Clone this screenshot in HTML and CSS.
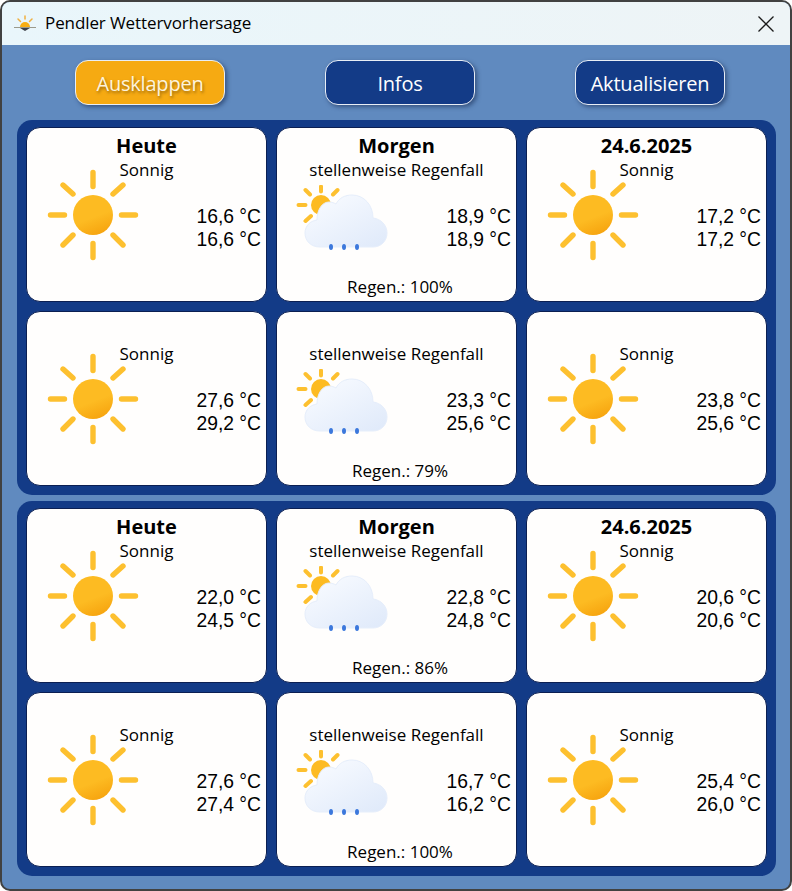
FILE: index.html
```html
<!DOCTYPE html>
<html lang="de">
  <head>
    <meta charset="UTF-8" />
    <meta name="viewport" content="width=device-width, initial-scale=1.0" />
    <title>Pendler Wettervorhersage</title>
    <link rel="stylesheet" href="styles.css">
  </head>
  <body>
    <!-- Icons, reused by every card -->
    <svg class="defs" width="0" height="0">
      <defs>
        <linearGradient id="sunFill" x1="0.35" y1="0.1" x2="0.7" y2="1">
          <stop offset="0.5" stop-color="#fdbb22" />
          <stop offset="1" stop-color="#f6a30e" />
        </linearGradient>
        <linearGradient id="cloudFill" x1="0.15" y1="0.1" x2="0.9" y2="1">
          <stop offset="0" stop-color="#f7faff" />
          <stop offset="1" stop-color="#e0eafa" />
        </linearGradient>
        <symbol id="sun" viewBox="0 0 92 92">
          <g stroke="#fdc02f" stroke-width="5.4" stroke-linecap="round">
            <path d="M46 3.5V17.5M46 74.5V88.5M3.500 46H17.500M74.500 46H88.500M16 16L26 25M66 25L76 16M16 76L26 66M66 66L76 76" />
          </g>
          <circle cx="46" cy="46" r="20" fill="url(#sunFill)" />
        </symbol>
        <symbol id="rain" viewBox="0 0 92 72">
          <g stroke="#fdc02f" stroke-width="4" stroke-linecap="round">
            <path d="M25 1.500V6.500M9.500 5L14 9.500M41.500 5L37 9.500M2.500 20H9.500M9.500 36L15 31" />
          </g>
          <circle cx="25" cy="20" r="10" fill="#fdbb22" />
          <path d="M24 62C15 62 9 56 9 48C9 41 14 36 21 35C21 25 26 17 33 17C36 17 38 18 40 19C43 13 49 10 56 10C68 10 77 20 77 33C85 34 91 40 91 48C91 56 85 62 77 62Z" fill="url(#cloudFill)" stroke="#e6eefb" />
          <g fill="#3c78dc">
            <ellipse cx="35" cy="62" rx="2" ry="3" />
            <ellipse cx="48" cy="62" rx="2" ry="3" />
            <ellipse cx="61" cy="62" rx="2" ry="3" />
          </g>
        </symbol>
      </defs>
    </svg>

    <div class="window">
      <div class="titlebar">
        <svg class="app-icon" viewBox="0 0 24 20" width="24" height="20">
          <g stroke="#f0b040" stroke-width="1.500" stroke-linecap="round">
            <path d="M12 2V5M5 5L7.500 7.500M19 5L16.500 7.500" />
          </g>
          <path d="M7 13A5 5 0 0 1 17 13Z" fill="#f8ae14" />
          <path d="M1 13.500H23" stroke="#9a9a8c" stroke-width="1.200" />
          <path d="M7 14H17L12 17Z" fill="#3d4048" />
        </svg>
        <span class="app-title">Pendler Wettervorhersage</span>
        <svg class="close" viewBox="0 0 16 16" width="16" height="16">
          <path d="M0.500 0.500L15.500 15.500M15.500 0.500L0.500 15.500" stroke="#1a1a1a" stroke-width="1.300" />
        </svg>
      </div>

      <div class="content">
        <div class="toolbar">
          <button class="btn btn-active">Ausklappen</button>
          <button class="btn">Infos</button>
          <button class="btn">Aktualisieren</button>
        </div>

        <div class="panel">
          <div class="card">
            <div class="day">Heute</div>
            <div class="cond">Sonnig</div>
            <svg class="icon-sun"><use href="#sun" /></svg>
            <div class="temps">16,6 °C<br>16,6 °C</div>
          </div>
          <div class="card">
            <div class="day">Morgen</div>
            <div class="cond">stellenweise Regenfall</div>
            <svg class="icon-rain"><use href="#rain" /></svg>
            <div class="temps">18,9 °C<br>18,9 °C</div>
            <div class="rain">Regen.: 100%</div>
          </div>
          <div class="card">
            <div class="day">24.6.2025</div>
            <div class="cond">Sonnig</div>
            <svg class="icon-sun"><use href="#sun" /></svg>
            <div class="temps">17,2 °C<br>17,2 °C</div>
          </div>
          <div class="card">
            <div class="day"></div>
            <div class="cond">Sonnig</div>
            <svg class="icon-sun"><use href="#sun" /></svg>
            <div class="temps">27,6 °C<br>29,2 °C</div>
          </div>
          <div class="card">
            <div class="day"></div>
            <div class="cond">stellenweise Regenfall</div>
            <svg class="icon-rain"><use href="#rain" /></svg>
            <div class="temps">23,3 °C<br>25,6 °C</div>
            <div class="rain">Regen.: 79%</div>
          </div>
          <div class="card">
            <div class="day"></div>
            <div class="cond">Sonnig</div>
            <svg class="icon-sun"><use href="#sun" /></svg>
            <div class="temps">23,8 °C<br>25,6 °C</div>
          </div>
        </div>

        <div class="panel">
          <div class="card">
            <div class="day">Heute</div>
            <div class="cond">Sonnig</div>
            <svg class="icon-sun"><use href="#sun" /></svg>
            <div class="temps">22,0 °C<br>24,5 °C</div>
          </div>
          <div class="card">
            <div class="day">Morgen</div>
            <div class="cond">stellenweise Regenfall</div>
            <svg class="icon-rain"><use href="#rain" /></svg>
            <div class="temps">22,8 °C<br>24,8 °C</div>
            <div class="rain">Regen.: 86%</div>
          </div>
          <div class="card">
            <div class="day">24.6.2025</div>
            <div class="cond">Sonnig</div>
            <svg class="icon-sun"><use href="#sun" /></svg>
            <div class="temps">20,6 °C<br>20,6 °C</div>
          </div>
          <div class="card">
            <div class="day"></div>
            <div class="cond">Sonnig</div>
            <svg class="icon-sun"><use href="#sun" /></svg>
            <div class="temps">27,6 °C<br>27,4 °C</div>
          </div>
          <div class="card">
            <div class="day"></div>
            <div class="cond">stellenweise Regenfall</div>
            <svg class="icon-rain"><use href="#rain" /></svg>
            <div class="temps">16,7 °C<br>16,2 °C</div>
            <div class="rain">Regen.: 100%</div>
          </div>
          <div class="card">
            <div class="day"></div>
            <div class="cond">Sonnig</div>
            <svg class="icon-sun"><use href="#sun" /></svg>
            <div class="temps">25,4 °C<br>26,0 °C</div>
          </div>
        </div>
      </div>
    </div>
  </body>
</html>
```

FILE: styles.css
```css
html,
body {
  margin: 0;
  background-color: white;
}
body {
  font-family: "Open Sans", "Noto Sans", sans-serif;
  color: black;
}
.defs {
  display: block;
  height: 0;
}
.window {
  width: 792px;
  height: 891px;
  box-sizing: border-box;
  border: 2px solid #414141;
  border-radius: 10px;
  overflow: hidden;
  background-color: #608abf;
}

/* Title bar */
.titlebar {
  height: 43px;
  display: flex;
  align-items: center;
  padding-left: 11px;
  padding-right: 16px;
  background: linear-gradient(to right, #e9f6fb, #eef4f6);
}
.app-icon {
  margin-right: 8px;
}
.app-title {
  flex: 1;
  margin-bottom: 2px;
  font-size: 17px;
  letter-spacing: -0.1px;
}

/* Buttons */
.content {
  padding: 15px 14px 0 15px;
}
.toolbar {
  display: flex;
  justify-content: center;
  gap: 100px;
  padding-left: 7px;
  margin-bottom: 15px;
}
.btn {
  width: 150px;
  height: 45px;
  padding: 2px 0 0;
  border: 1px solid #e8eef6;
  border-radius: 13px;
  background-color: #133b87;
  color: white;
  font-family: inherit;
  font-size: 20px;
  letter-spacing: -0.2px;
  box-shadow: 2px 2px 4px rgba(20, 40, 80, 0.55);
}
.btn-active {
  background-color: #f6aa12;
  color: #fdf3dc;
  text-shadow: 1px 2px 3px rgba(90, 60, 10, 0.6);
}

/* Forecast panels */
.panel {
  display: grid;
  grid-template-columns: repeat(3, 241px);
  grid-auto-rows: 175px;
  gap: 9px;
  padding: 7px 9px 9px 9px;
  margin-bottom: 6px;
  border-radius: 15px;
  background-color: #133b87;
}
.card {
  display: grid;
  grid-template-rows: 30px 24px 1fr 30px;
  box-sizing: border-box;
  border: 1px solid #0b1f52;
  border-radius: 14px;
  background-color: #fffefd;
  text-align: center;
  font-size: 17px;
}
.day {
  grid-row: 1;
  grid-column: 1;
  align-self: end;
  font-size: 20px;
  font-weight: 700;
  line-height: 24px;
}
.cond {
  grid-row: 2;
  grid-column: 1;
  line-height: 24px;
}
.icon-sun {
  grid-row: 2 / 4;
  grid-column: 1;
  width: 92px;
  height: 92px;
  margin-left: 20px;
  margin-top: 11px;
}
.icon-rain {
  grid-row: 2 / 4;
  grid-column: 1;
  width: 92px;
  height: 72px;
  margin-left: 19px;
  margin-top: 27px;
}
.temps {
  grid-row: 3;
  grid-column: 1;
  justify-self: end;
  margin-top: 23px;
  margin-right: 5px;
  font-family: "Liberation Sans", sans-serif;
  font-size: 19.3px;
  line-height: 23px;
  text-align: right;
}
.rain {
  grid-row: 4;
  grid-column: 1;
  padding-left: 7px;
  line-height: 32px;
}
```
